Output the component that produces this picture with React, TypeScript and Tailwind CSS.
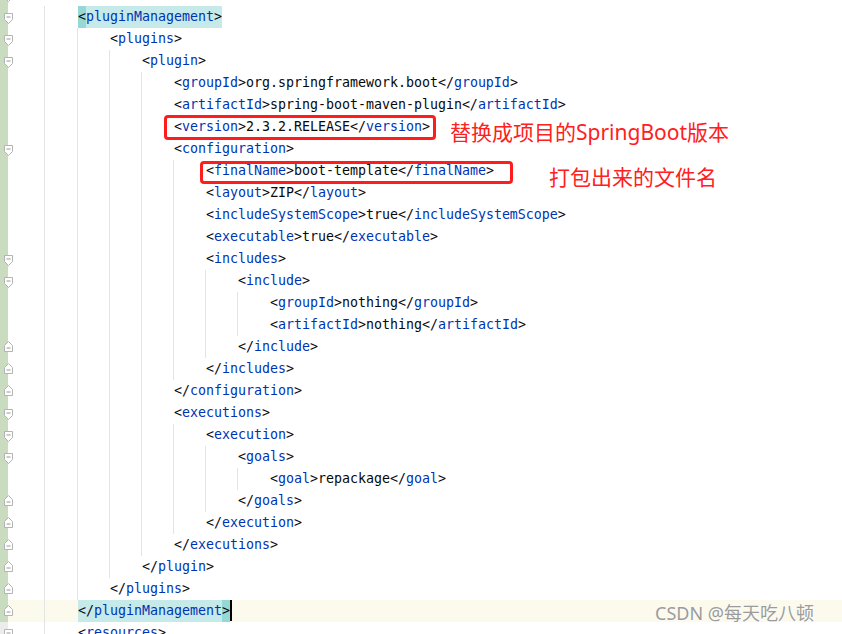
type Fold = 'open' | 'close' | undefined;

type Line = {
  level: number;
  code: string;
  fold?: Fold;
  match?: 'open' | 'close';
  current?: boolean;
  noVcs?: boolean;
  note?: 'version' | 'finalName';
};

const lines: Line[] = [
  { level: -1, code: '', fold: 'open' },
  { level: 0, code: '<pluginManagement>', fold: 'open', match: 'open' },
  { level: 1, code: '<plugins>', fold: 'open' },
  { level: 2, code: '<plugin>', fold: 'open' },
  { level: 3, code: '<groupId>org.springframework.boot</groupId>' },
  { level: 3, code: '<artifactId>spring-boot-maven-plugin</artifactId>' },
  { level: 3, code: '<version>2.3.2.RELEASE</version>', note: 'version' },
  { level: 3, code: '<configuration>', fold: 'open' },
  { level: 4, code: '<finalName>boot-template</finalName>', note: 'finalName' },
  { level: 4, code: '<layout>ZIP</layout>' },
  { level: 4, code: '<includeSystemScope>true</includeSystemScope>' },
  { level: 4, code: '<executable>true</executable>' },
  { level: 4, code: '<includes>', fold: 'open' },
  { level: 5, code: '<include>', fold: 'open' },
  { level: 6, code: '<groupId>nothing</groupId>' },
  { level: 6, code: '<artifactId>nothing</artifactId>' },
  { level: 5, code: '</include>', fold: 'close' },
  { level: 4, code: '</includes>', fold: 'close' },
  { level: 3, code: '</configuration>', fold: 'close' },
  { level: 3, code: '<executions>', fold: 'open' },
  { level: 4, code: '<execution>', fold: 'open' },
  { level: 5, code: '<goals>', fold: 'open' },
  { level: 6, code: '<goal>repackage</goal>' },
  { level: 5, code: '</goals>', fold: 'close' },
  { level: 4, code: '</execution>', fold: 'close' },
  { level: 3, code: '</executions>', fold: 'close' },
  { level: 2, code: '</plugin>', fold: 'close' },
  { level: 1, code: '</plugins>', fold: 'close' },
  { level: 0, code: '</pluginManagement>', fold: 'close', match: 'close', current: true },
  { level: 0, code: '<resources>', fold: 'open', noVcs: true },
];

// split "<a>text</a>" into bracket / tag name / text pieces
function tokenize(code: string) {
  const out: { t: string; k: 'b' | 'n' | 'x' }[] = [];
  const re = /(<\/|<|>)|([^<>]+)/g;
  let m: RegExpExecArray | null;
  let inTag = false;
  while ((m = re.exec(code))) {
    if (m[1]) {
      out.push({ t: m[1], k: 'b' });
      inTag = m[1] !== '>';
    } else {
      out.push({ t: m[2], k: inTag ? 'n' : 'x' });
    }
  }
  return out;
}

function FoldMark({ kind }: { kind: 'open' | 'close' }) {
  const d =
    kind === 'open'
      ? 'M0.5 0.5 H8.5 V6.5 L4.5 10.5 L0.5 6.5 Z'
      : 'M0.5 10.5 H8.5 V4.5 L4.5 0.5 L0.5 4.5 Z';
  return (
    <svg
      width="9"
      height="11"
      viewBox="0 0 9 11"
      className={`absolute left-[4px] ${kind === 'open' ? 'top-[7px]' : 'top-[5px]'}`}
    >
      <path d={d} fill="#ffffff" stroke="#b4b4b4" />
      <path d={kind === 'open' ? 'M2.5 4 H6.5' : 'M2.5 7 H6.5'} stroke="#9a9a9a" />
    </svg>
  );
}

function Code({ line }: { line: Line }) {
  const tokens = tokenize(line.code);
  if (line.match) {
    const first = tokens[0];
    const last = tokens[tokens.length - 1];
    const middle = tokens.slice(1, -1);
    return (
      <span className="inline-block h-[22px] bg-[#c6eaea]">
        {line.match === 'open' ? (
          <span className="inline-block h-[22px] bg-[#96d8d5] text-[#080808]">{first.t}</span>
        ) : (
          <span className="text-[#080808]">{first.t}</span>
        )}
        {middle.map((p, i) => (
          <span key={i} className="text-[#0033b3]">
            {p.t}
          </span>
        ))}
        {line.match === 'close' ? (
          <span className="inline-block h-[22px] bg-[#96d8d5] text-[#080808]">{last.t}</span>
        ) : (
          <span className="text-[#080808]">{last.t}</span>
        )}
      </span>
    );
  }
  return (
    <>
      {tokens.map((p, i) => (
        <span key={i} className={p.k === 'n' ? 'text-[#0033b3]' : 'text-[#080808]'}>
          {p.t}
        </span>
      ))}
    </>
  );
}

function CodeLine({ line }: { line: Line }) {
  const guides = Array.from({ length: line.level + 1 }, (_, k) => k);
  return (
    <div className={`relative flex h-[22px] ${line.current ? 'bg-[#fcfaed]' : ''}`}>
      <div className={`w-[8px] shrink-0 ${line.noVcs ? 'bg-[#ececec]' : 'bg-[#c9dcc0]'}`} />
      <div className="w-[36px] shrink-0" />
      {guides.map((k) => (
        <div
          key={k}
          className={`h-[22px] shrink-0 border-l border-[#e4e4e4] ${k === 0 ? 'w-[33px]' : 'w-[32px]'}`}
        />
      ))}
      <div className="whitespace-pre pl-[1px] leading-[22px]">
        <Code line={line} />
        {line.current && <span className="inline-block h-[21px] w-[2px] bg-black align-top" />}
      </div>
      {line.fold && <FoldMark kind={line.fold} />}

      {line.note === 'version' && (
        <>
          <div className="absolute left-[164px] top-[-1px] h-[25px] w-[272px] rounded-[4px] border-[3px] border-[#ff1c1c]" />
          <div className="absolute left-[450px] top-[2px] whitespace-nowrap font-['Noto_Sans','Noto_Sans_CJK_SC',sans-serif] text-[21px] leading-[28px] text-[#ff2020]">
            替换成项目的SpringBoot版本
          </div>
        </>
      )}
      {line.note === 'finalName' && (
        <>
          <div className="absolute left-[200px] top-[1px] h-[23px] w-[313px] rounded-[4px] border-[3px] border-[#ff1c1c]" />
          <div className="absolute left-[549px] top-[3px] whitespace-nowrap font-['Noto_Sans','Noto_Sans_CJK_SC',sans-serif] text-[21px] leading-[28px] text-[#ff2020]">
            打包出来的文件名
          </div>
        </>
      )}
    </div>
  );
}

export default function App() {
  return (
    <div className="relative h-[634px] w-[842px] overflow-hidden bg-white font-['DejaVu_Sans_Mono',monospace] text-[13.29px]">
      <div className="mt-[-16px] flex flex-col">
        {lines.map((line, i) => (
          <CodeLine key={i} line={line} />
        ))}
      </div>
      <div className="absolute left-[655px] top-[600px] whitespace-nowrap font-['Noto_Sans','Noto_Sans_CJK_SC',sans-serif] text-[18px] leading-[26px] text-[#9b9b9b] [text-shadow:0_0_1px_#ffffff]">
        CSDN @每天吃八顿
      </div>
    </div>
  );
}
